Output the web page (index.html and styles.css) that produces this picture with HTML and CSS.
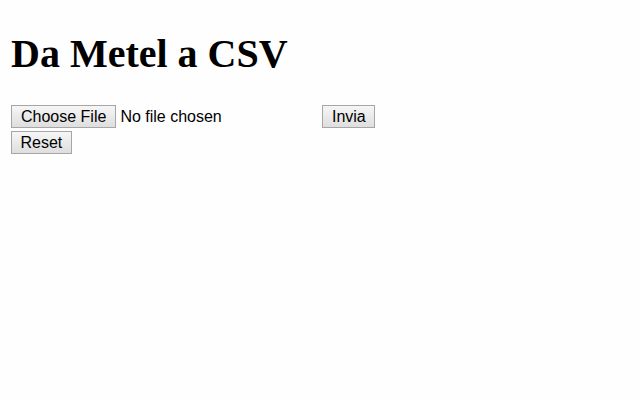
FILE: index.html
```html
<!DOCTYPE html>
<html lang="it">
<head>
<meta charset="utf-8">
<title>Da Metel a CSV</title>
<link rel="stylesheet" href="styles.css">
</head>
<body>
<h1 class="title">Da Metel a CSV</h1>
<form class="upload" action="#" method="post" enctype="multipart/form-data">
<input class="file" type="file" name="file"> <input class="btn" type="submit" value="Invia"><br>
<input class="btn" type="reset" value="Reset">
</form>
</body>
</html>
```
FILE: styles.css
```css
html, body {
  background: #fefefe;
}
body {
  margin: 11px;
  font-family: "Liberation Serif", "Times New Roman", serif;
  color: #000;
}
.title {
  font-family: "Liberation Serif", "Times New Roman", serif;
  font-size: 40px;
  font-weight: bold;
  margin: 19px 0 28px;
}
.upload {
  margin: 0;
  font-family: "Liberation Sans", Arial, sans-serif;
  font-size: 16px;
}
.file {
  font-family: "Liberation Sans", Arial, sans-serif;
  font-size: 16px;
  width: 307px;
  margin: 0 0 3px;
  padding: 0;
  color: #000;
}
.file::file-selector-button {
  font-family: "Liberation Sans", Arial, sans-serif;
  font-size: 16px;
  padding: 1.5px 9px;
  margin: 0 4px 0 0;
  border: 1px solid #a6a6a6;
  border-radius: 0;
  background: linear-gradient(#f6f6f6, #dedede);
  color: #000;
}
.btn {
  font-family: "Liberation Sans", Arial, sans-serif;
  font-size: 16px;
  padding: 1.5px 8.5px;
  margin: 0 0 3px;
  border: 1px solid #a6a6a6;
  border-radius: 0;
  background: linear-gradient(#f6f6f6, #dedede);
  color: #000;
}
```
